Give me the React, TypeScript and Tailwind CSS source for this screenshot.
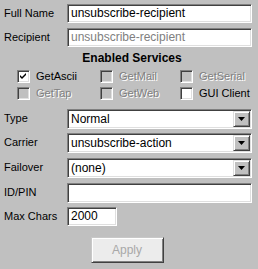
import React from "react";

const sunken =
  "border border-t-[#808080] border-l-[#808080] border-r-white border-b-white shadow-[inset_1px_1px_0_#404040,inset_-1px_-1px_0_#dfdfdf]";

function Label({ children }: { children: React.ReactNode }) {
  return <div className="w-[63px] shrink-0 pt-[2px] text-[11px] leading-[14px] text-black">{children}</div>;
}

function TextBox({ value, gray, w }: { value: string; gray?: boolean; w?: string }) {
  return (
    <div
      className={`${sunken} ${w ?? "flex-1"} h-[19px] bg-white pl-[3px] text-[12px] leading-[17px] ${gray ? "text-[#808080]" : "text-black"} overflow-hidden whitespace-nowrap`}
    >
      {value}
    </div>
  );
}

function Select({ value }: { value: string }) {
  return (
    <div className={`${sunken} flex-1 h-[20px] bg-white flex items-stretch`}>
      <div className="flex-1 pl-[3px] text-[12px] leading-[18px] text-black overflow-hidden whitespace-nowrap">{value}</div>
      <div className="w-[17px] m-[1px] bg-[#c0c0c0] border border-t-[#dfdfdf] border-l-[#dfdfdf] border-r-[#404040] border-b-[#404040] shadow-[inset_1px_1px_0_#ffffff,inset_-1px_-1px_0_#808080] flex items-center justify-center">
        <svg width="7" height="4" viewBox="0 0 7 4">
          <path d="M0 0H7L3.5 4Z" fill="#000" />
        </svg>
      </div>
    </div>
  );
}

function Check({ label, checked, disabled, w }: { label: string; checked?: boolean; disabled?: boolean; w: string }) {
  return (
    <div className={`${w} flex items-center h-[14px]`}>
      <div
        className={`${sunken} w-[13px] h-[13px] shrink-0 ${disabled ? "bg-[#c0c0c0]" : "bg-white"} flex items-center justify-center`}
      >
        {checked && (
          <svg width="7" height="7" viewBox="0 0 7 7">
            <path d="M0 2L2 4L6 0V2L2 6L0 4Z" fill="#000" />
          </svg>
        )}
      </div>
      <span
        className={`ml-[6px] text-[11px] leading-[14px] whitespace-nowrap ${disabled ? "text-[#808080] [text-shadow:1px_1px_0_#ffffff]" : "text-black"}`}
      >
        {label}
      </span>
    </div>
  );
}

export default function App() {
  return (
    <div className="w-[258px] h-[269px] bg-[#c0c0c0] font-['Liberation_Sans',Arial,sans-serif] pt-[4px] pl-[4px] pr-[6px] flex flex-col">
      <div className="flex items-start">
        <Label>Full Name</Label>
        <TextBox value="unsubscribe-recipient" />
      </div>
      <div className="flex items-start mt-[5px]">
        <Label>Recipient</Label>
        <TextBox value="unsubscribe-recipient" gray />
      </div>
      <div className="mt-[4px] text-center font-bold text-[12px] leading-[14px] text-black pl-[8px]">Enabled Services</div>
      <div className="mt-[4px] pl-[13px] flex flex-col gap-[3px]">
        <div className="flex">
          <Check w="w-[83px]" label="GetAscii" checked />
          <Check w="w-[80px]" label="GetMail" disabled />
          <Check w="w-[70px]" label="GetSerial" disabled />
        </div>
        <div className="flex">
          <Check w="w-[83px]" label="GetTap" disabled />
          <Check w="w-[80px]" label="GetWeb" disabled />
          <Check w="w-[70px]" label="GUI Client" />
        </div>
      </div>
      <div className="flex items-start mt-[9px]">
        <Label>Type</Label>
        <Select value="Normal" />
      </div>
      <div className="flex items-start mt-[4px]">
        <Label>Carrier</Label>
        <Select value="unsubscribe-action" />
      </div>
      <div className="flex items-start mt-[5px]">
        <Label>Failover</Label>
        <Select value="(none)" />
      </div>
      <div className="flex items-start mt-[5px]">
        <Label>ID/PIN</Label>
        <div className={`${sunken} flex-1 h-[20px] bg-white`} />
      </div>
      <div className="flex items-start mt-[4px]">
        <Label>Max Chars</Label>
        <TextBox value="2000" w="w-[50px]" />
      </div>
      <div className="mt-[11px] flex justify-center pr-[2px]">
        <div className="w-[73px] h-[26px] bg-[#ececec] border border-t-[#c8c8c8] border-l-[#c8c8c8] border-r-[#404040] border-b-[#404040] shadow-[inset_1px_1px_0_#ffffff,inset_-1px_-1px_0_#808080] flex items-center justify-center text-[12px] text-[#a8a8a8]">
          Apply
        </div>
      </div>
    </div>
  );
}
